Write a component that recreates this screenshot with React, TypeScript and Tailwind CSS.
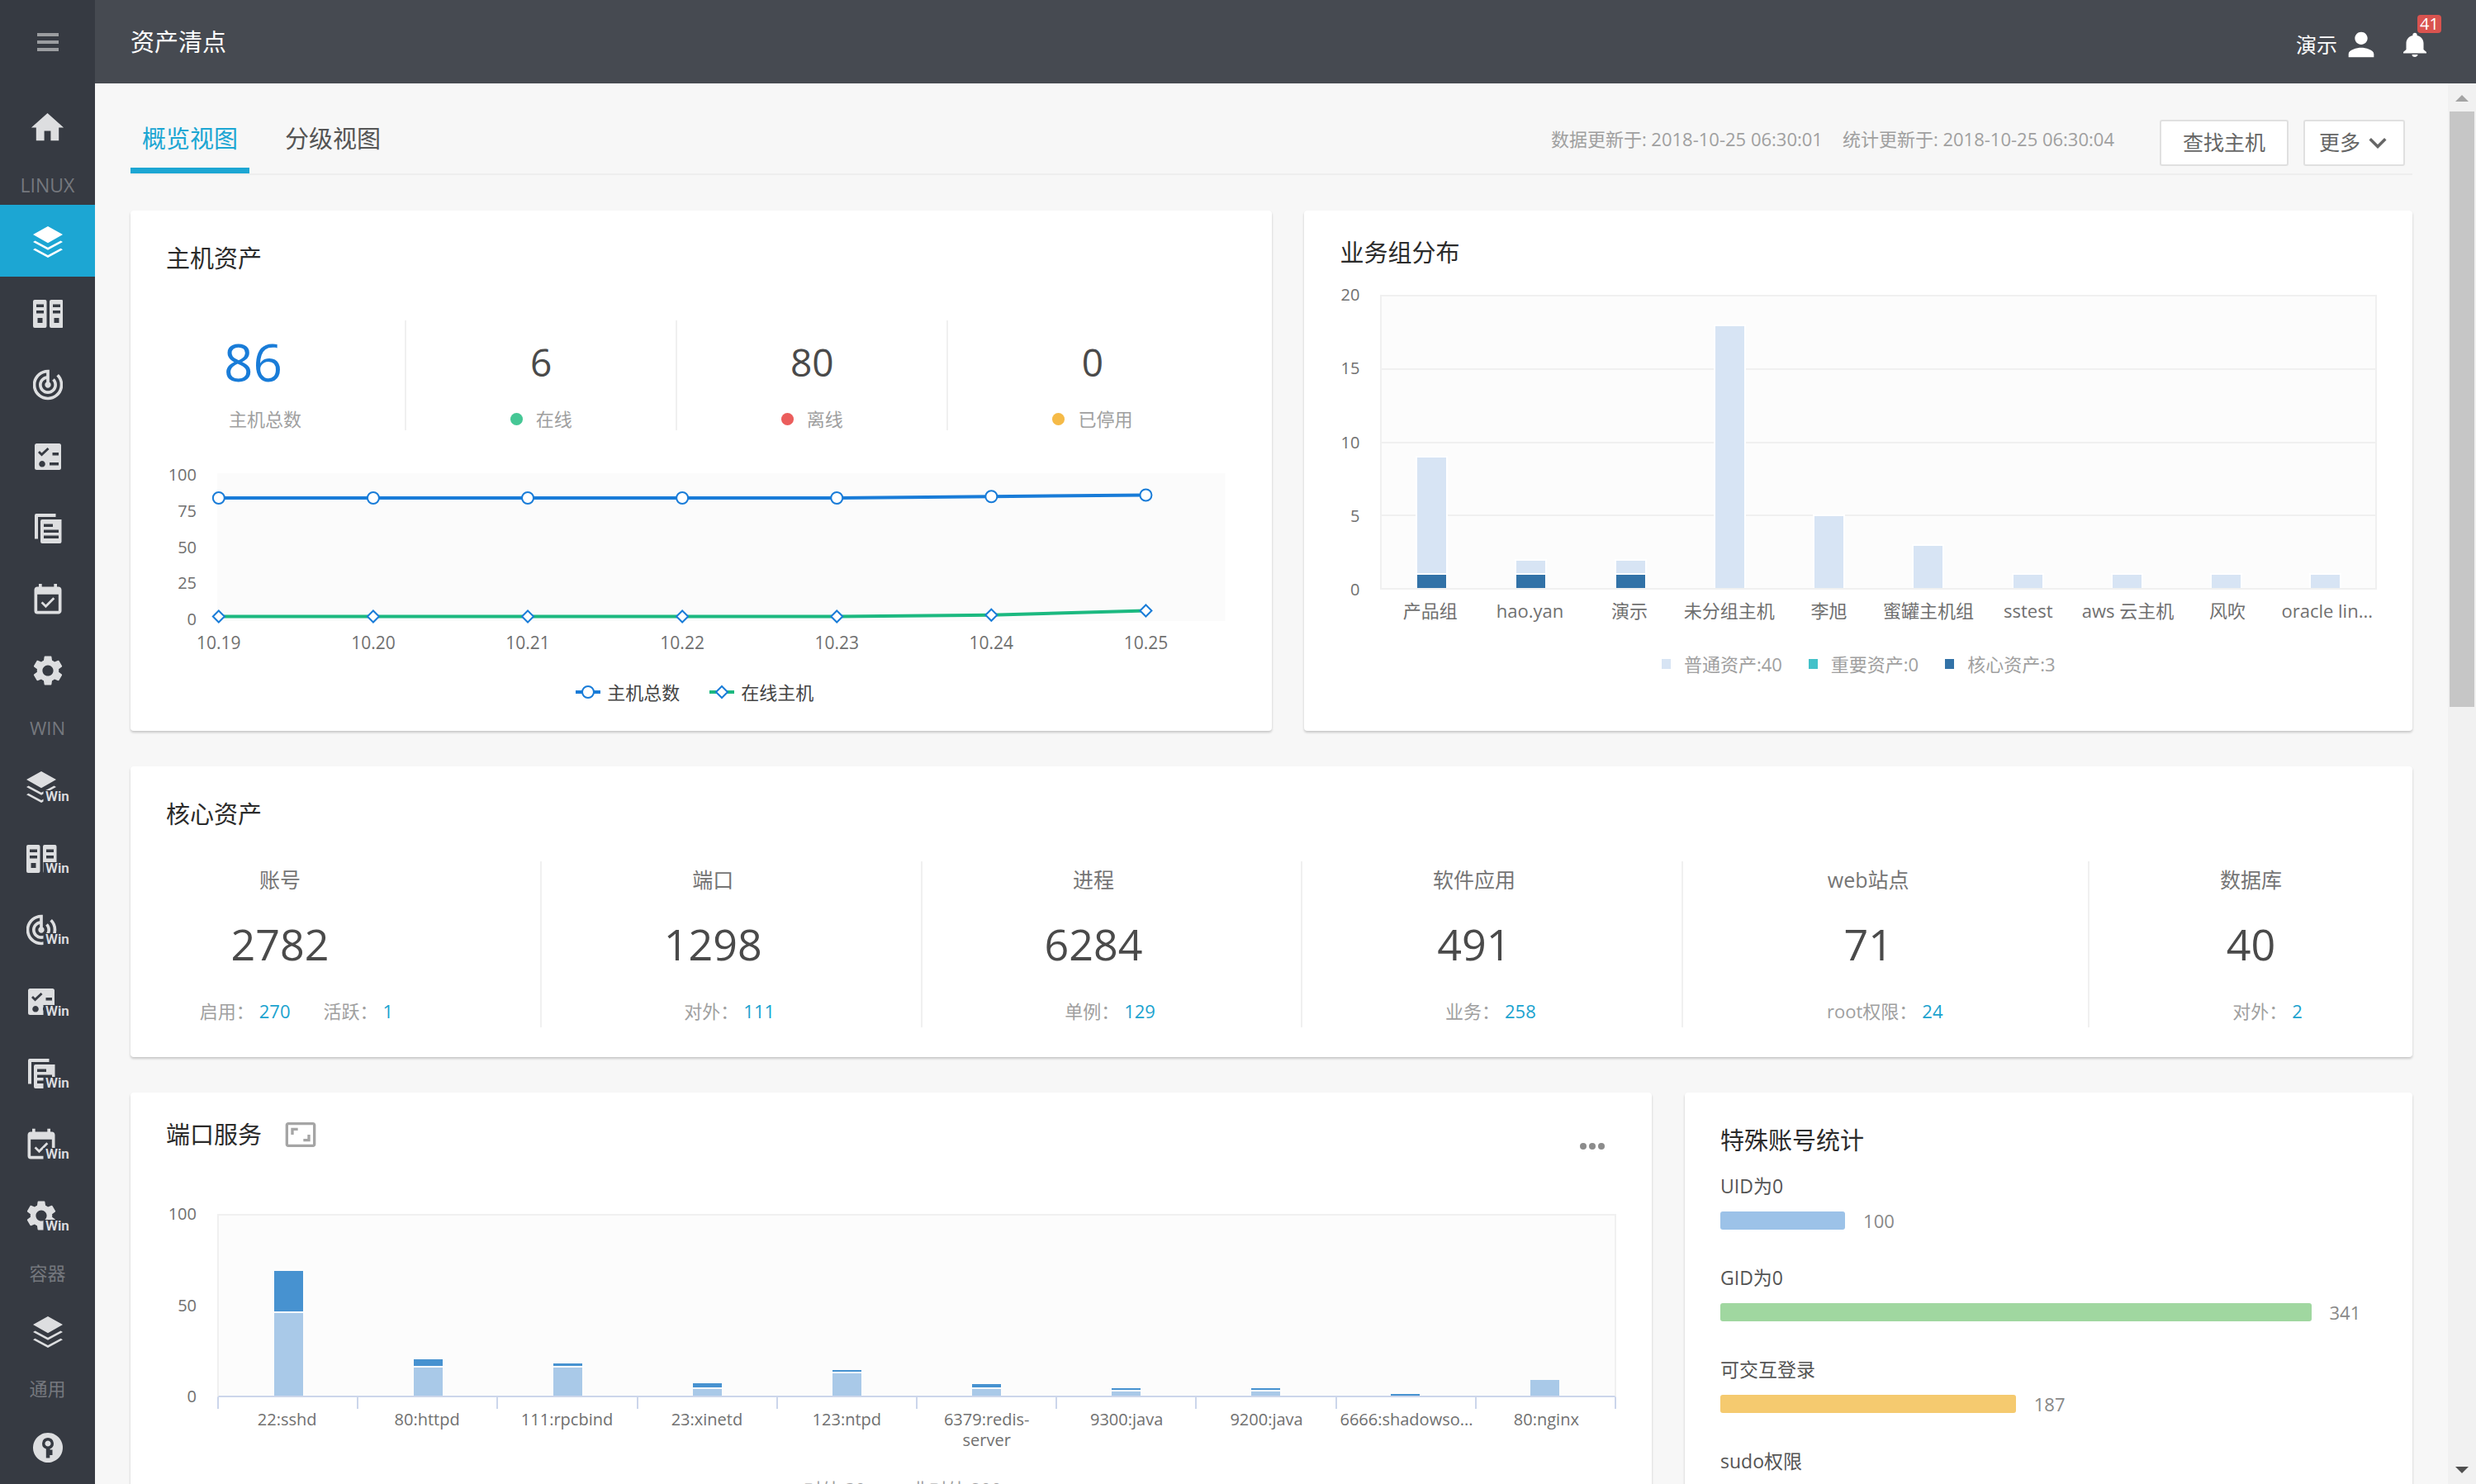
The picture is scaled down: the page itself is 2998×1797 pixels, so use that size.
import { useId } from 'react'
import type { ReactNode } from 'react'
import {
  MdAspectRatio,
  MdEventAvailable,
  MdExpandMore,
  MdHome,
  MdNotifications,
  MdPerson,
  MdSettings,
  MdTrackChanges,
} from 'react-icons/md'

/* ---------- sidebar glyphs, all drawn in a 36x38 box ---------- */

const LayersGlyph = () => (
  <path d="M18 0 36 10 18 20.3 0 10ZM2.5 17.5 18 25.7l15.5-8.2L36 19 18 28.8 0 19ZM2.5 26.7 18 34.9l15.5-8.2L36 28.2 18 38 0 28.2Z" />
)

const ServersGlyph = () => (
  <path
    fillRule="evenodd"
    d="M2 2h12.5a2 2 0 0 1 2 2v30a2 2 0 0 1-2 2H2a2 2 0 0 1-2-2V4a2 2 0 0 1 2-2ZM4 7.5v3.5h9V7.5ZM4 15v3.5h9V15ZM5.5 24v6h6v-6ZM22 2h12.5a2 2 0 0 1 2 2v30a2 2 0 0 1-2 2H22a2 2 0 0 1-2-2V4a2 2 0 0 1 2-2ZM24 7.5v3.5h9V7.5ZM24 15v3.5h9V15ZM25.5 24v6h6v-6Z"
  />
)

const RadarGlyph = () => <MdTrackChanges x={-4} y={-3} size={44} />

const ChecklistGlyph = () => (
  <path
    fillRule="evenodd"
    d="M4.5 3h27A2.5 2.5 0 0 1 34 5.5v27a2.5 2.5 0 0 1-2.5 2.5h-27A2.5 2.5 0 0 1 2 32.5v-27A2.5 2.5 0 0 1 4.5 3ZM6 14l4.5 4.5L19.5 10l-2-2-7 6.5L8 12ZM23.5 14v3.5H31V14ZM20 26v3.5h11V26ZM11 24a3.8 3.8 0 1 0 .01 0Z"
  />
)

const DocsGlyph = () => (
  <path
    fillRule="evenodd"
    d="M4 1h23.5v4H6v26.5H2V3a2 2 0 0 1 2-2ZM11 8h23.5v27a2 2 0 0 1-2 2H11a2 2 0 0 1-2-2V10a2 2 0 0 1 2-2ZM13 13.5V17h11v-3.5ZM13 20.5V24h18v-3.5ZM13 27.5V31h18v-3.5Z"
  />
)

const CalendarGlyph = () => <MdEventAvailable x={-4} y={-2} size={44} />

const GearGlyph = () => <MdSettings x={-4} y={-4} size={44} />

const KeyGlyph = () => (
  <path
    fillRule="evenodd"
    d="M18 1a18 18 0 1 1-.01 0ZM18 7a7 7 0 0 0-2.2 13.6V31.5h4.5V28h3.2v-6.5H20.5v-1A7 7 0 0 0 18 7ZM18 10.5a3.5 3.5 0 1 1-.01 0Z"
  />
)

const assetItems = [
  { label: '资产清点', glyph: <LayersGlyph />, active: true },
  { label: '主机', glyph: <ServersGlyph /> },
  { label: '入侵检测', glyph: <RadarGlyph /> },
  { label: '风险发现', glyph: <ChecklistGlyph /> },
  { label: '日志', glyph: <DocsGlyph /> },
  { label: '合规基线', glyph: <CalendarGlyph /> },
  { label: '设置', glyph: <GearGlyph /> },
]

function NavItem({ label, glyph, active, win }: { label: string; glyph: ReactNode; active?: boolean; win?: boolean }) {
  const id = useId()

  return (
    <a
      href="#"
      aria-label={win ? `${label} Win` : label}
      className={`flex min-h-[86px] flex-auto items-center justify-center pt-1 ${active ? 'bg-[#1ca6d3] text-white' : 'text-[#dddee0]'}`}
    >
      {win ? (
        <svg width="52" height="46" viewBox="0 -4 52 46" fill="currentColor">
          <clipPath id={id}>
            <path d="M0-2h37v25H20.5v17H0Z" />
          </clipPath>
          <g clipPath={`url(#${id})`}>{glyph}</g>
          <text x="23" y="36" fontSize="17" fontWeight="600" fontFamily="Roboto, sans-serif">
            Win
          </text>
        </svg>
      ) : (
        <svg width="36" height="38" viewBox="0 0 36 38" fill="currentColor">
          {glyph}
        </svg>
      )}
    </a>
  )
}

function NavLabel({ children }: { children: ReactNode }) {
  return (
    <div className="flex h-[54px] shrink-0 items-center justify-center text-[22px] text-[#75787e]">{children}</div>
  )
}

function Sidebar() {
  return (
    <nav className="flex w-[115px] shrink-0 flex-col overflow-hidden bg-[#363a42]">
      <button className="flex h-[101px] shrink-0 flex-col items-center justify-center gap-[5px]" aria-label="菜单">
        <span className="h-1 w-[26px] bg-[#9b9da0]" />
        <span className="h-1 w-[26px] bg-[#9b9da0]" />
        <span className="h-1 w-[26px] bg-[#9b9da0]" />
      </button>
      <a href="#" aria-label="首页" className="flex h-[107px] shrink-0 items-center justify-center text-[#dddee0]">
        <MdHome size={47} />
      </a>
      <div className="flex h-10 shrink-0 items-center justify-center pb-2 text-[23px] text-[#75787e]">LINUX</div>
      <div className="flex h-[606px] shrink-0 flex-col">
        {assetItems.map((item) => (
          <NavItem key={item.label} {...item} />
        ))}
      </div>
      <NavLabel>WIN</NavLabel>
      <div className="flex h-[606px] shrink-0 flex-col">
        {assetItems.map((item) => (
          <NavItem key={item.label} {...item} active={false} win />
        ))}
      </div>
      <NavLabel>容器</NavLabel>
      <div className="flex h-[86px] shrink-0">
        <NavItem label="容器资产" glyph={<LayersGlyph />} />
      </div>
      <NavLabel>通用</NavLabel>
      <div className="flex h-[86px] shrink-0">
        <NavItem label="授权" glyph={<KeyGlyph />} />
      </div>
    </nav>
  )
}

function Header() {
  return (
    <header className="flex h-[101px] shrink-0 items-center justify-between bg-[#464a51] pr-[53px] pl-[43px] text-white">
      <h1 className="text-[29px] leading-10">资产清点</h1>
      <div className="flex items-center gap-[21px] pt-1.5">
        <button className="flex items-center gap-1.5 text-[25px] leading-9">
          演示
          <MdPerson size={46} />
        </button>
        <button className="relative" aria-label="通知">
          <MdNotifications className="h-[36px] w-[42px]" preserveAspectRatio="none" />
          <span className="absolute -top-[18px] left-6 rounded-[4px] bg-[#d9534f] px-[3px] text-[20px] leading-[22px]">
            41
          </span>
        </button>
      </div>
    </header>
  )
}

/* ---------- shared pieces ---------- */

function Card({ className = '', children }: { className?: string; children: ReactNode }) {
  return (
    <section className={`rounded-[4px] bg-white shadow-[0_2px_3px_rgba(0,0,0,0.2)] ${className}`}>{children}</section>
  )
}

function CardTitle({ children }: { children: ReactNode }) {
  return <h2 className="text-[29px] leading-10 text-[#2b2b2b]">{children}</h2>
}

function YAxis({ ticks, className = '' }: { ticks: number[]; className?: string }) {
  return (
    <div className={`flex flex-col items-end justify-between text-[20px] text-[#707070] ${className}`}>
      {ticks.map((t) => (
        <span key={t} className="flex h-0 items-center">
          {t}
        </span>
      ))}
    </div>
  )
}

/* ---------- host assets ---------- */

const days = ['10.19', '10.20', '10.21', '10.22', '10.23', '10.24', '10.25']
const totals = [84, 84, 84, 84, 84, 85, 86]
const online = [2, 2, 2, 2, 2, 3, 6]

const pointX = (i: number) => `${0.15 + i * 15.33}%`
const pointY = (v: number) => 177 - v * 1.75

function Marker({ shape }: { shape: 'circle' | 'diamond' }) {
  return shape === 'circle' ? (
    <circle r="7" fill="#fff" stroke="#197cd8" strokeWidth="2" />
  ) : (
    <path d="M0-7 7 0 0 7-7 0Z" fill="#fff" stroke="#197cd8" strokeWidth="2" />
  )
}

function Series({ data, color, shape }: { data: number[]; color: string; shape: 'circle' | 'diamond' }) {
  return (
    <>
      {data.slice(1).map((v, i) => (
        <line
          key={i}
          x1={pointX(i)}
          y1={pointY(data[i])}
          x2={pointX(i + 1)}
          y2={pointY(v)}
          stroke={color}
          strokeWidth="4"
        />
      ))}
      {data.map((v, i) => (
        <svg key={i} x={pointX(i)} y={pointY(v)} className="overflow-visible">
          <Marker shape={shape} />
        </svg>
      ))}
    </>
  )
}

function LegendLine({ color, shape, children }: { color: string; shape: 'circle' | 'diamond'; children: ReactNode }) {
  return (
    <span className="flex items-center gap-2">
      <svg width="30" height="20" viewBox="-15 -10 30 20">
        <line x1="-15" x2="15" y1="0" y2="0" stroke={color} strokeWidth="4" />
        <Marker shape={shape} />
      </svg>
      {children}
    </span>
  )
}

const hostStats = [
  { value: 6, label: '在线', dot: 'bg-[#45c795]' },
  { value: 80, label: '离线', dot: 'bg-[#eb5d5c]' },
  { value: 0, label: '已停用', dot: 'bg-[#f5ba47]' },
]

function HostAssets() {
  return (
    <Card className="h-[630px] px-[43px] pt-[38px]">
      <CardTitle>主机资产</CardTitle>
      <div className="mt-[55px] grid h-[133px] grid-cols-[289fr_328fr_328fr_351fr]">
        <div className="flex flex-col justify-between pt-3.5 pl-[70px]">
          <div className="text-[62px] leading-[72px] text-[#197cd8]">86</div>
          <div className="pl-1.5 text-[22px] leading-7 text-[#a0a0a0]">主机总数</div>
        </div>
        {hostStats.map((s) => (
          <div key={s.label} className="flex flex-col items-center justify-between border-l-2 border-[#f0f0f0] pt-3.5">
            <div className="text-[46px] leading-[72px] text-[#4a4a4a]">{s.value}</div>
            <div className="flex items-center gap-4 text-[22px] leading-7 text-[#a0a0a0]">
              <i className={`h-[15px] w-[15px] rounded-full ${s.dot}`} />
              {s.label}
            </div>
          </div>
        ))}
      </div>
      <div className="mt-[52px] flex pr-[14px]">
        <YAxis ticks={[100, 75, 50, 25, 0]} className="mt-0.5 mr-[25px] h-[175px] w-[37px]" />
        <svg className="h-[220px] flex-1 overflow-visible">
          <rect width="100%" height="179" fill="#fbfbfb" />
          <Series data={totals} color="#197cd8" shape="circle" />
          <Series data={online} color="#1cb980" shape="diamond" />
          {days.map((d, i) => (
            <text key={d} x={pointX(i)} y="213" textAnchor="middle" fontSize="21" fill="#707070">
              {d}
            </text>
          ))}
        </svg>
      </div>
      <div className="mt-[30px] flex justify-center gap-9 pr-4 text-[22px] leading-[30px] text-[#444]">
        <LegendLine color="#197cd8" shape="circle">
          主机总数
        </LegendLine>
        <LegendLine color="#1cb980" shape="diamond">
          在线主机
        </LegendLine>
      </div>
    </Card>
  )
}

/* ---------- business groups ---------- */

const groups = [
  { name: '产品组', normal: 8, core: 1 },
  { name: 'hao.yan', normal: 1, core: 1 },
  { name: '演示', normal: 1, core: 1 },
  { name: '未分组主机', normal: 18, core: 0 },
  { name: '李旭', normal: 5, core: 0 },
  { name: '蜜罐主机组', normal: 3, core: 0 },
  { name: 'sstest', normal: 1, core: 0 },
  { name: 'aws 云主机', normal: 1, core: 0 },
  { name: '风吹', normal: 1, core: 0 },
  { name: 'oracle lin...', normal: 1, core: 0 },
]

const groupLegend = [
  { text: '普通资产:40', color: 'bg-[#d7e4f4]' },
  { text: '重要资产:0', color: 'bg-[#43c1c9]' },
  { text: '核心资产:3', color: 'bg-[#3272a7]' },
]

function BusinessGroups() {
  return (
    <Card className="h-[630px] px-[43px] pt-[31px]">
      <CardTitle>业务组分布</CardTitle>
      <div className="mt-[31px] flex">
        <YAxis ticks={[20, 15, 10, 5, 0]} className="mr-[25px] h-[357px] w-6" />
        <div className="flex-1">
          <div className="relative h-[357px] border-2 border-t-0 border-[#f0f0f0] bg-[#fcfcfc]">
            <div className="absolute inset-0 flex flex-col">
              {[0, 1, 2, 3].map((n) => (
                <div key={n} className="flex-1 border-t-2 border-[#f0f0f0]" />
              ))}
            </div>
            <div className="relative flex h-full">
              {groups.map((g) => (
                <div key={g.name} className="flex flex-1 flex-col items-center justify-end">
                  <div
                    className="w-[39px] border-2 border-b-0 border-white bg-[#d7e4f4]"
                    style={{ height: `${g.normal * 5}%` }}
                  />
                  {g.core > 0 && (
                    <div
                      className="w-[39px] border-2 border-b-0 border-white bg-[#3272a7]"
                      style={{ height: `${g.core * 5}%` }}
                    />
                  )}
                </div>
              ))}
            </div>
          </div>
          <div className="mt-2.5 flex text-[22px] leading-[30px] text-[#707070]">
            {groups.map((g) => (
              <span key={g.name} className="flex flex-1 basis-0 justify-center whitespace-nowrap">
                {g.name}
              </span>
            ))}
          </div>
        </div>
      </div>
      <div className="mt-[35px] flex justify-center gap-8 text-[22px] leading-[30px] text-[#a0a0a0]">
        {groupLegend.map((l) => (
          <span key={l.text} className="flex items-center gap-4">
            <i className={`h-3 w-[11px] ${l.color}`} />
            {l.text}
          </span>
        ))}
      </div>
    </Card>
  )
}

/* ---------- core assets ---------- */

const coreAssets = [
  { name: '账号', value: 2782, pad: 'pr-[134px]', subs: [['启用', 270], ['活跃', 1]] },
  { name: '端口', value: 1298, pad: 'pr-11', subs: [['对外', 111]] },
  { name: '进程', value: 6284, pad: 'pr-11', subs: [['单例', 129]] },
  { name: '软件应用', value: 491, pad: 'pr-11', subs: [['业务', 258]] },
  { name: 'web站点', value: 71, pad: 'pr-[42px]', subs: [['root权限', 24]] },
  { name: '数据库', value: 40, pad: '', subs: [['对外', 2]] },
]

function CoreAssets() {
  return (
    <Card className="mt-[43px] pt-[38px] pb-9">
      <div className="px-[43px]">
        <CardTitle>核心资产</CardTitle>
      </div>
      <div className="mt-[37px] grid h-[201px] grid-cols-[496fr_461fr_461fr_461fr_492fr_393fr]">
        {coreAssets.map((a, i) => (
          <div
            key={a.name}
            className={`flex min-w-0 flex-col items-center pt-1 ${a.pad} ${i > 0 ? 'border-l-2 border-[#f0f0f0]' : ''}`}
          >
            <div className="text-[25px] leading-9 text-[#757575]">{a.name}</div>
            <div className="mt-6 text-[52px] leading-[72px] text-[#4a4a4a]">{a.value}</div>
            <div className="mt-[30px] ml-10 flex gap-10 text-[22px] leading-[30px] text-[#a0a0a0]">
              {a.subs.map(([k, v]) => (
                <span key={k} className="whitespace-nowrap">
                  {k}：
                  <a href="#" className="ml-1.5 text-[#1ba3cf]">
                    {v}
                  </a>
                </span>
              ))}
            </div>
          </div>
        ))}
      </div>
    </Card>
  )
}

/* ---------- port services ---------- */

const ports = [
  { name: '22:sshd', light: 100, dark: 51 },
  { name: '80:httpd', light: 34, dark: 10 },
  { name: '111:rpcbind', light: 34, dark: 5 },
  { name: '23:xinetd', light: 8, dark: 7 },
  { name: '123:ntpd', light: 27, dark: 4 },
  { name: '6379:redis-\nserver', light: 8, dark: 6 },
  { name: '9300:java', light: 5, dark: 4 },
  { name: '9200:java', light: 5, dark: 4 },
  { name: '6666:shadowso...', light: 0, dark: 4 },
  { name: '80:nginx', light: 19, dark: 0 },
]

function PortServices() {
  return (
    <Card className="px-[43px] pt-[31px]">
      <div className="flex items-center">
        <CardTitle>端口服务</CardTitle>
        <button className="ml-[27px] text-[#a5a5a5]" aria-label="放大">
          <MdAspectRatio size={40} />
        </button>
        <button className="mt-7 mr-[14px] ml-auto flex gap-[3px]" aria-label="更多操作">
          <i className="h-2 w-2 rounded-full bg-[#8c8c8c]" />
          <i className="h-2 w-2 rounded-full bg-[#8c8c8c]" />
          <i className="h-2 w-2 rounded-full bg-[#8c8c8c]" />
        </button>
      </div>
      <div className="mt-[76px] flex">
        <YAxis ticks={[100, 50, 0]} className="mr-[25px] h-[221px] w-[37px]" />
        <div className="min-w-0 flex-1">
          <div className="flex h-[222px] border-2 border-[#f0f0f0] border-b-[#ccd6eb] bg-[#fcfcfc]">
            {ports.map((p) => (
              <div key={p.name} className="flex flex-1 flex-col items-center justify-end gap-0.5">
                {p.dark > 0 && <div className="w-[35px] bg-[#4792d0]" style={{ height: p.dark - 2 }} />}
                {p.light > 0 && <div className="w-[35px] bg-[#a9c9e8]" style={{ height: p.light }} />}
              </div>
            ))}
          </div>
          <div className="flex h-[14px] border-r-2 border-[#ccd6eb]">
            {ports.map((p) => (
              <div key={p.name} className="flex-1 border-l-2 border-[#ccd6eb]" />
            ))}
          </div>
          <div className="flex text-center text-[20px] leading-[25px] text-[#707070]">
            {ports.map((p) => (
              <span key={p.name} className="flex flex-1 basis-0 justify-center whitespace-pre">
                {p.name}
              </span>
            ))}
          </div>
        </div>
      </div>
      <div className="mt-8 flex justify-center gap-[55px] pb-10 pl-7 text-[22px] leading-[30px] text-[#a0a0a0]">
        <span>对外:30</span>
        <span>非对外:200</span>
      </div>
    </Card>
  )
}

/* ---------- special accounts ---------- */

const accounts = [
  { name: 'UID为0', value: 100, width: 19, color: 'bg-[#9cc2e8]' },
  { name: 'GID为0', value: 341, width: 90, color: 'bg-[#a0d7a0]' },
  { name: '可交互登录', value: 187, width: 45, color: 'bg-[#f5ca6f]' },
  { name: 'sudo权限', value: 120, width: 28, color: 'bg-[#eb8f8e]' },
]

function SpecialAccounts() {
  return (
    <Card className="px-[43px] pt-[38px]">
      <CardTitle>特殊账号统计</CardTitle>
      <ul className="mt-[18px] flex flex-col gap-[38px]">
        {accounts.map((a) => (
          <li key={a.name}>
            <div className="text-[23px] leading-[34px] text-[#555]">{a.name}</div>
            <div className="mt-[11px] flex h-7 items-center gap-[22px] text-[22px] text-[#888]">
              <div className={`h-[22px] rounded-[3px] ${a.color}`} style={{ width: `${a.width}%` }} />
              {a.value}
            </div>
          </li>
        ))}
      </ul>
    </Card>
  )
}

/* ---------- page ---------- */

function Toolbar() {
  return (
    <div className="flex h-[111px] shrink-0 justify-between border-b-2 border-[#eee]">
      <div className="flex gap-[29px] text-[29px] leading-10">
        <button className="border-b-[7px] border-[#1ca6d3] px-[14px] pt-8 text-[#1ca6d3]">概览视图</button>
        <button className="border-b-[7px] border-transparent px-[14px] pt-8 text-[#555]">分级视图</button>
      </div>
      <div className="flex items-center pt-[34px] pr-[9px]">
        <div className="mr-[55px] flex gap-6 pb-2 text-[22px] text-[#a0a0a0]">
          <span>数据更新于: 2018-10-25 06:30:01</span>
          <span>统计更新于: 2018-10-25 06:30:04</span>
        </div>
        <button className="mr-[18px] h-14 rounded-[3px] border-2 border-[#e0e0e0] bg-white px-[26px] text-[25px] text-[#666]">
          查找主机
        </button>
        <button className="flex h-14 items-center rounded-[3px] border-2 border-[#e0e0e0] bg-white pr-2.5 pl-[17px] text-[25px] text-[#666]">
          更多
          <MdExpandMore size={42} />
        </button>
      </div>
    </div>
  )
}

function ScrollTrack() {
  return (
    <div className="flex w-[34px] shrink-0 flex-col items-center bg-[#f1f1f1]" aria-hidden="true">
      <svg className="shrink-0" width="34" height="34" viewBox="0 0 34 34">
        <path d="M17 14l8 8H9Z" fill="#a3a3a3" />
      </svg>
      <div className="min-h-0 w-full flex-1 px-0.5">
        <div className="h-[44.3%] bg-[#c6c6c6]" />
      </div>
      <svg className="shrink-0" width="34" height="34" viewBox="0 0 34 34">
        <path d="M17 21l8-8H9Z" fill="#505050" />
      </svg>
    </div>
  )
}

export default function App() {
  return (
    <div className="flex h-screen overflow-hidden bg-[#f7f7f7] font-['Open_Sans','Noto_Sans_CJK_SC',sans-serif]">
      <Sidebar />
      <div className="flex min-w-0 flex-1 flex-col">
        <Header />
        <div className="flex min-h-0 flex-1">
          <main className="min-w-0 flex-1 overflow-hidden px-[43px]">
            <Toolbar />
            <div className="mt-[43px] grid grid-cols-[1383fr_1342fr] gap-[39px]">
              <HostAssets />
              <BusinessGroups />
            </div>
            <CoreAssets />
            <div className="mt-[43px] grid grid-cols-[1842fr_881fr] gap-10">
              <PortServices />
              <SpecialAccounts />
            </div>
          </main>
          <ScrollTrack />
        </div>
      </div>
    </div>
  )
}
